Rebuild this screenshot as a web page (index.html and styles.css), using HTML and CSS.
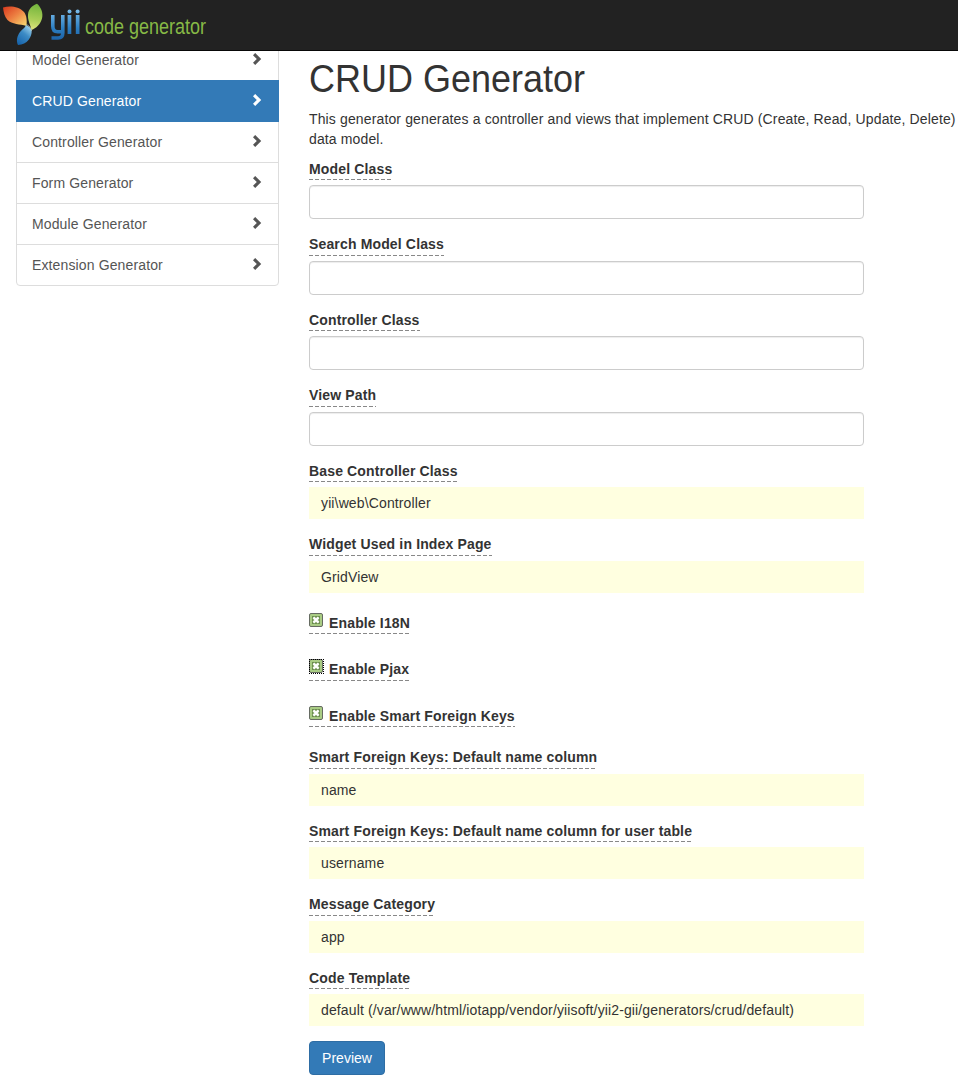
FILE: index.html
```html
<!DOCTYPE html>
<html lang="en">
<head>
<meta charset="utf-8">
<title>CRUD Generator</title>
<link rel="stylesheet" href="styles.css">
</head>
<body>
<svg class="defs" width="0" height="0">
  <symbol id="chevron" viewBox="0 0 10 14"><path d="M1 3.2 3.2 1 9.2 7 3.2 13 1 10.8 4.8 7z" fill="currentColor"/></symbol>
  <symbol id="check" viewBox="0 0 15 15">
    <rect x=".5" y=".5" width="13" height="13" rx="1.5" fill="#a9cc84" stroke="#666b62"/>
    <rect x="3.5" y="3.5" width="7" height="7" fill="#86a669" stroke="#6c8f4e"/>
    <path d="M4.4 4.4 9.6 9.6M9.6 4.4 4.4 9.6" stroke="#fff" stroke-width="2.2"/>
  </symbol>
</svg>
<header class="navbar">
  <svg class="logo" width="85" height="50" viewBox="0 0 85 50">
    <defs>
      <linearGradient id="red" x1="0" y1="0" x2="1" y2="1"><stop offset="0" stop-color="#d9381d"/><stop offset=".5" stop-color="#ed8243"/><stop offset="1" stop-color="#f9dd72"/></linearGradient>
      <linearGradient id="green" x1=".5" y1="0" x2=".4" y2="1"><stop offset="0" stop-color="#72b43c"/><stop offset=".6" stop-color="#aace57"/><stop offset="1" stop-color="#e0e680"/></linearGradient>
      <linearGradient id="blue" x1=".8" y1="0" x2=".2" y2="1"><stop offset="0" stop-color="#a6d8ef"/><stop offset=".45" stop-color="#3c8bc5"/><stop offset="1" stop-color="#1764ab"/></linearGradient>
      <linearGradient id="word" gradientUnits="userSpaceOnUse" x1="0" y1="10" x2="0" y2="40"><stop offset="0" stop-color="#79bceb"/><stop offset=".6" stop-color="#2d7fc2"/><stop offset="1" stop-color="#1c62a8"/></linearGradient>
    </defs>
    <path d="M3 7.5C10 5.500 19 6.500 24 12C27 16 27 21 26.500 26C20 24 12 24.500 7.500 20C4.500 16.500 3.500 12 3 7.500z" fill="url(#red)"/>
    <path d="M37 3.700C41 7 43.500 13 42 18.500C40.500 24 36 28.500 31.500 30C30.500 25 27.500 20 28 14.500C28.500 9 32 5.500 37 3.700z" fill="url(#green)"/>
    <path d="M26 25C29 26 31 28 31.700 30.500C32 37 27.500 44.500 18 45C16 41 17 36 20 32C22.500 29 25 28 26 25z" fill="url(#blue)"/>
    <path d="M26.500 24.500C29.500 25.500 31.200 28 31.500 31" fill="none" stroke="#eef3d2" stroke-width=".5"/>
    <g fill="none" stroke="url(#word)" stroke-width="3.6">
      <path d="M52.800 15V26Q52.800 31.800 57.500 31.800H62.500M62.800 15V33Q62.800 38 58 38H51.500"/>
    </g>
    <g fill="url(#word)">
      <path d="M67.600 15h3.700v19h-3.700zM75.800 15h3.700v19h-3.700z"/>
      <circle cx="69.500" cy="11.500" r="2"/><circle cx="77.600" cy="11.500" r="2"/>
    </g>
  </svg>
  <span class="tagline">code generator</span>
</header>
<div class="page">
  <nav class="menu">
    <a class="item">Model Generator<svg class="chev"><use href="#chevron"/></svg></a>
    <a class="item active">CRUD Generator<svg class="chev"><use href="#chevron"/></svg></a>
    <a class="item">Controller Generator<svg class="chev"><use href="#chevron"/></svg></a>
    <a class="item">Form Generator<svg class="chev"><use href="#chevron"/></svg></a>
    <a class="item">Module Generator<svg class="chev"><use href="#chevron"/></svg></a>
    <a class="item">Extension Generator<svg class="chev"><use href="#chevron"/></svg></a>
  </nav>
  <main class="content">
    <h1>CRUD Generator</h1>
    <p class="intro">This generator generates a controller and views that implement CRUD (Create, Read, Update, Delete)<br>data model.</p>
    <div class="group"><label>Model Class</label><input class="control" type="text"></div>
    <div class="group"><label>Search Model Class</label><input class="control" type="text"></div>
    <div class="group"><label>Controller Class</label><input class="control" type="text"></div>
    <div class="group"><label>View Path</label><input class="control" type="text"></div>
    <div class="group sticky"><label>Base Controller Class</label><div class="value">yii\web\Controller</div></div>
    <div class="group sticky"><label>Widget Used in Index Page</label><div class="value">GridView</div></div>
    <div class="group checkbox"><label><svg class="box"><use href="#check"/></svg>Enable I18N</label></div>
    <div class="group checkbox"><label><svg class="box focus"><use href="#check"/></svg>Enable Pjax</label></div>
    <div class="group checkbox"><label><svg class="box"><use href="#check"/></svg>Enable Smart Foreign Keys</label></div>
    <div class="group sticky"><label>Smart Foreign Keys: Default name column</label><div class="value">name</div></div>
    <div class="group sticky"><label>Smart Foreign Keys: Default name column for user table</label><div class="value">username</div></div>
    <div class="group sticky"><label>Message Category</label><div class="value">app</div></div>
    <div class="group sticky"><label>Code Template</label><div class="value">default (/var/www/html/iotapp/vendor/yiisoft/yii2-gii/generators/crud/default)</div></div>
    <button class="preview">Preview</button>
  </main>
</div>
</body>
</html>
```
FILE: styles.css
```css
* { box-sizing: border-box; }
body { margin: 0; height: 1078px; overflow: hidden; background: #fff; color: #333; font: 14px/20px "Liberation Sans", Arial, sans-serif; letter-spacing: .13px; }
.defs { position: absolute; }
.navbar { position: fixed; top: 0; left: 0; right: 0; display: flex; align-items: flex-start; height: 51px; background: #222; border-bottom: 1px solid #080808; z-index: 2; }
.logo { display: block; flex: none; }
.tagline { margin-top: 12px; font-size: 22px; line-height: 30px; letter-spacing: 0; color: #87b946; white-space: nowrap; transform: scaleX(.818); transform-origin: 0 0; }
.page { display: flex; align-items: flex-start; gap: 30px; padding: 39px 0 0 16px; }
.menu { width: 263px; flex: none; border: 1px solid #ddd; border-radius: 4px; }
.item { display: flex; justify-content: space-between; align-items: center; height: 41px; padding: 0 16px 1px 15px; border-bottom: 1px solid #ddd; color: #555; }
.item:last-child { border-bottom: 0; height: 40px; padding-bottom: 0; }
.item.active { height: 42px; margin: -1px -1px 0; padding: 0 17px 0 16px; position: relative; background: #337ab7; border: 0; color: #fff; }
.chev { width: 10px; height: 14px; margin-top: -2px; }
.content { flex: 1; min-width: 0; padding-top: 20px; }
h1 { width: 300px; margin: 0 0 9.9px; font-size: 38.5px; line-height: 40px; font-weight: 400; letter-spacing: 0; white-space: nowrap; transform: scaleX(.935); transform-origin: 0 0; }
.intro { margin: 0 0 10px; white-space: nowrap; letter-spacing: .135px; }
.group { height: 75.5px; }
.group.sticky { height: 73.5px; }
label { display: block; width: fit-content; height: 21.2px; margin-bottom: 5px; font-weight: 700; letter-spacing: .15px; white-space: nowrap; background: repeating-linear-gradient(90deg, #888 0 4px, transparent 4px 6px) 0 100% / 100% 1px no-repeat; }
.control { display: block; width: 555px; height: 34px; margin: 0; border: 1px solid #ccc; border-radius: 4px; box-shadow: inset 0 1px 1px rgba(0,0,0,.075); }
.value { width: 555px; height: 32px; padding: 6px 12px; background: #ffffe0; white-space: nowrap; }
.group.checkbox { height: 46.5px; padding-top: 5px; }
.box { width: 15px; height: 15px; margin-right: 5px; vertical-align: 0; }
.focus { outline: 1px dotted #000; outline-offset: -1px; }
.preview { display: block; width: 76px; height: 34px; padding: 0; border: 1px solid #2e6da4; border-radius: 4px; background: #337ab7; color: #fff; font: inherit; }
```
